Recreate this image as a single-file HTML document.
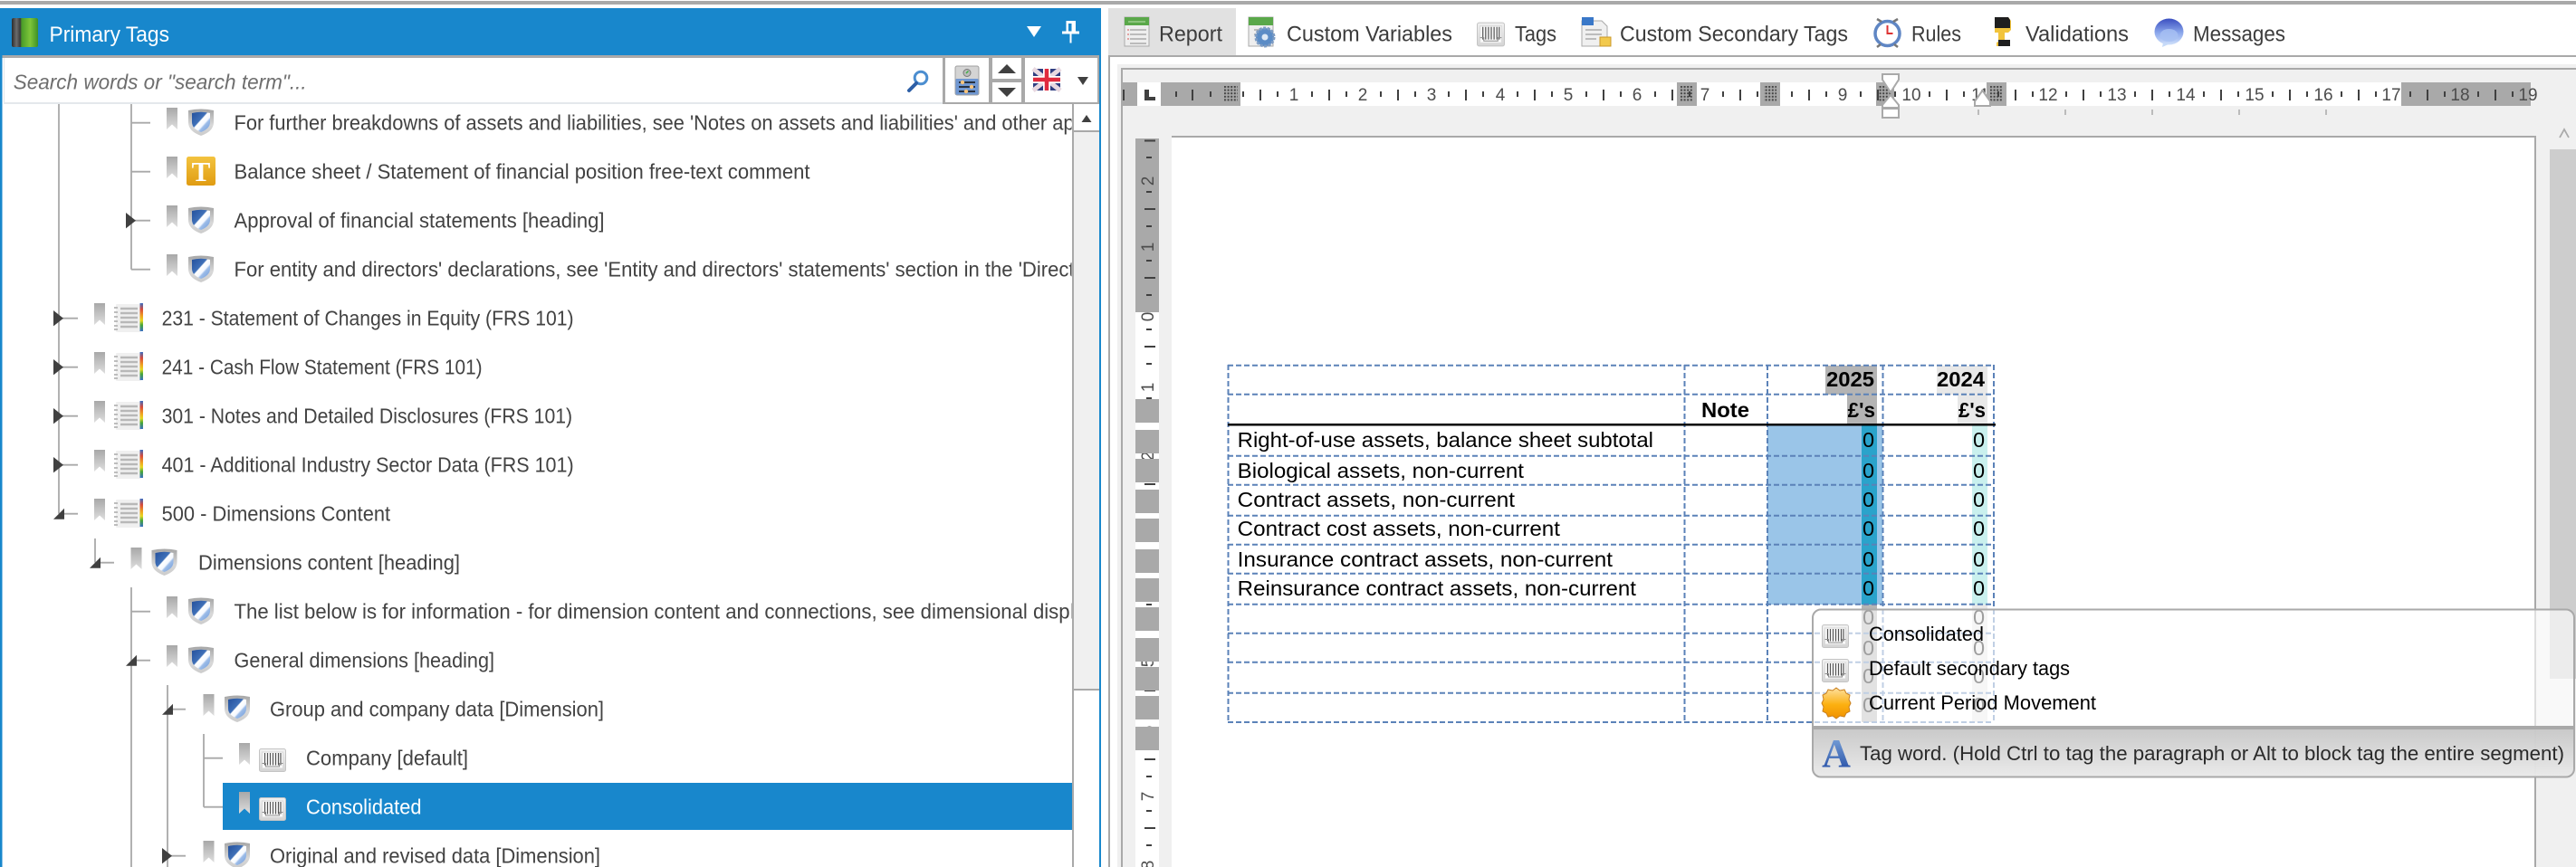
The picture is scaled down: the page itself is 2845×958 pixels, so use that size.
<!DOCTYPE html>
<html lang="en">
<head>
<meta charset="utf-8">
<title>Primary Tags</title>
<style>
html,body{margin:0;padding:0;background:#fff;width:2845px;height:958px;overflow:hidden}
svg{display:block}
text{font-family:"Liberation Sans",sans-serif}
.t{font-size:23px;fill:#424242}
.h{font-size:24px;fill:#3c3c3c}
.d{font-size:23.5px;fill:#000}
.b{font-size:23.5px;fill:#000;font-weight:bold}
.r{font-size:19px;fill:#4c4c4c;text-anchor:middle}
.tip{font-size:22.5px;fill:#000}
</style>
</head>
<body>
<svg xmlns="http://www.w3.org/2000/svg" width="2845" height="958" viewBox="0 0 2845 958">
<defs>
<linearGradient id="gBm" x1="0" y1="0" x2="0" y2="1"><stop offset="0" stop-color="#a8a8a8"/><stop offset="1" stop-color="#dedede"/></linearGradient>
<linearGradient id="gSil" x1="0" y1="0" x2="0" y2="1"><stop offset="0" stop-color="#a6a6a6"/><stop offset=".6" stop-color="#d8d8d8"/><stop offset="1" stop-color="#cccccc"/></linearGradient>
<linearGradient id="gSh" x1="0" y1="0" x2="1" y2="1"><stop offset="0" stop-color="#24509c"/><stop offset=".42" stop-color="#3f70b8"/><stop offset=".46" stop-color="#fff"/><stop offset=".62" stop-color="#f4f8ff"/><stop offset=".68" stop-color="#9cbce8"/><stop offset="1" stop-color="#6f9ad8"/></linearGradient>
<linearGradient id="gT" x1="0" y1="0" x2="0" y2="1"><stop offset="0" stop-color="#f3c33f"/><stop offset="1" stop-color="#e09c12"/></linearGradient>
<linearGradient id="gRain" x1="0" y1="0" x2="0" y2="1"><stop offset="0" stop-color="#3a6fc4"/><stop offset=".22" stop-color="#d94b3a"/><stop offset=".45" stop-color="#f0a020"/><stop offset=".62" stop-color="#e8d820"/><stop offset=".78" stop-color="#48a838"/><stop offset="1" stop-color="#3a6fc4"/></linearGradient>
<linearGradient id="gBar" x1="0" y1="0" x2="0" y2="1"><stop offset="0" stop-color="#f2f2f2"/><stop offset="1" stop-color="#d4d4d4"/></linearGradient>
<linearGradient id="gBook" x1="0" y1="0" x2="1" y2="0"><stop offset="0" stop-color="#2c2c2c"/><stop offset=".18" stop-color="#6c6c6c"/><stop offset=".32" stop-color="#3a3a3a"/><stop offset=".38" stop-color="#4a9c28"/><stop offset=".7" stop-color="#7ec63a"/><stop offset="1" stop-color="#3e9026"/></linearGradient>
<linearGradient id="gTip" x1="0" y1="0" x2="0" y2="1"><stop offset="0" stop-color="#c4c4c4"/><stop offset="1" stop-color="#e8e8e8"/></linearGradient>
<linearGradient id="gSun" x1="0" y1="0" x2="0" y2="1"><stop offset="0" stop-color="#fde0a0"/><stop offset=".55" stop-color="#fcb010"/><stop offset="1" stop-color="#f09000"/></linearGradient>
<linearGradient id="gA" x1="0" y1="0" x2="0" y2="1"><stop offset="0" stop-color="#86aee0"/><stop offset="1" stop-color="#1c46a0"/></linearGradient>
<linearGradient id="gMsg" x1="0" y1="0" x2="0" y2="1"><stop offset="0" stop-color="#3a4ec0"/><stop offset=".55" stop-color="#8ca8ec"/><stop offset="1" stop-color="#cfe0fa"/></linearGradient>
<pattern id="dots" patternUnits="userSpaceOnUse" width="3.6" height="3.6" x="1352" y="95"><rect width="2" height="2" fill="#444"/></pattern>
<symbol id="bm" viewBox="0 0 12 24" width="12" height="24"><path d="M0 0H12V24L6 18.5L0 24Z" fill="url(#gBm)"/></symbol>
<symbol id="sh" viewBox="0 0 28 30" width="28" height="30"><path d="M0 2Q14 -1 28 2V15Q28 25 14 30Q0 25 0 15Z" fill="url(#gSil)"/><path d="M4 5Q14 2.5 24 5V15Q24 22 14 26Q4 22 4 15Z" fill="url(#gSh)"/></symbol>
<symbol id="ls" viewBox="0 0 32 32" width="32" height="32"><rect x="2" y="1" width="28" height="31" rx="1" fill="#f0f0f0"/><rect x="28.500" y="0" width="3.500" height="31" fill="url(#gRain)"/><path d="M0 5h4M0 10h4M0 15h4M0 20h4M0 25h4M0 29h4" stroke="#bdbdbd" stroke-width="2"/><path d="M7 6h19M7 11h19M7 16h19M7 21h19M7 26h19" stroke="#b8b8b8" stroke-width="2.6"/></symbol>
<symbol id="bc" viewBox="0 0 30 26" width="30" height="26"><rect x=".5" y=".5" width="29" height="25" rx="2" fill="url(#gBar)" stroke="#c4c4c4"/><path d="M3.500 4h23v18h-23z" fill="#fbfbfb" stroke="#dadada"/><path d="M6.500 5v13.500M9.500 5v13.500M12.500 5v13.500M15.500 5v13.500M18.500 5v13.500M21.500 5v13.500M24 5v13.500" stroke="#555" stroke-width="1.200"/><path d="M3.500 16.500h4v3.500h15v-3.500h4" fill="none" stroke="#8c8c8c" stroke-width="1"/></symbol>
<symbol id="tk" viewBox="0 0 76 14" width="76" height="14"><path d="M19 2v6M57 2v6M38 0v12" stroke="#404040" stroke-width="2"/></symbol>
<symbol id="vk" viewBox="0 0 14 76" width="14" height="76"><path d="M4 19h6M4 57h6M2 38h12" stroke="#404040" stroke-width="2"/></symbol>
<clipPath id="cTree"><rect x="0" y="115" width="1183.5" height="843"/></clipPath>
</defs>

<!-- top strip -->
<rect x="0" y="1" width="2845" height="4" fill="#a9a9a9"/>

<!-- left panel -->
<rect x="0" y="9" width="1216" height="52" fill="#1887cc"/>
<rect x="0" y="9" width="2.5" height="949" fill="#1887cc"/>
<rect x="1214" y="9" width="2" height="949" fill="#1887cc"/>
<rect x="2.5" y="61" width="1211.5" height="3" fill="#a9a9a9"/>
<rect x="13" y="20" width="29" height="32" rx="2" fill="url(#gBook)"/>
<text x="54.5" y="46" font-size="24.5" fill="#fff" textLength="132.5" lengthAdjust="spacingAndGlyphs">Primary Tags</text>
<path d="M1134 29h16l-8 12z" fill="#fff"/>
<path d="M1177.500 23h10.500v11.500h4v3h-8.500v10h-2v-10h-8.500v-3h4.500zM1180 26v8.500h3.500v-8.500z" fill="#fff" fill-rule="evenodd"/>

<!-- search row -->
<rect x="4" y="64" width="1037" height="49" fill="#fff"/>
<rect x="4" y="64" width="1" height="49" fill="#e2e6ea"/>
<rect x="4" y="113" width="1037" height="2" fill="#e4e8ec"/>
<text x="14.7" y="98.5" font-size="23" font-style="italic" fill="#6e6e6e" textLength="324" lengthAdjust="spacingAndGlyphs">Search words or "search term"...</text>
<circle cx="1017" cy="86" r="6.8" fill="none" stroke="#4c8ed0" stroke-width="3"/>
<path d="M1012 92L1004 100" stroke="#2d5fa6" stroke-width="4" stroke-linecap="round"/>
<path d="M1041 64h3v49h-3zM1092 64h4v49h-4zM1128 64h4v49h-4zM1212 64h2v49h-2zM1096 87h32v4h-32zM1041 113h173v2h-173z" fill="#a9a9a9"/>
<rect x="1055" y="73" width="26" height="32" rx="2" fill="#d4d4d4" stroke="#a0a0a0"/>
<rect x="1055.5" y="87" width="25" height="17.5" rx="1" fill="#6f97d2"/>
<circle cx="1068" cy="80.5" r="4" fill="#bbb" stroke="#777"/><path d="M1067 81l2.5 -2.5" stroke="#3cb043" stroke-width="1.5"/>
<path d="M1059 91h18M1059 96h18M1059 101h18" stroke="#111" stroke-width="1.5"/>
<circle cx="1063" cy="91" r="2.2" fill="#f6c27a"/><circle cx="1073" cy="96" r="2.2" fill="#f6c27a"/><circle cx="1067" cy="101" r="2.2" fill="#f6c27a"/>
<path d="M1102 81l10 -10l10 10z" fill="#404040"/>
<path d="M1102 97h20l-10 10z" fill="#404040"/>
<rect x="1141" y="76" width="30" height="24" rx="2" fill="#2f3d80"/>
<path d="M1141 76l30 24M1171 76l-30 24" stroke="#e8d8e0" stroke-width="5"/>
<path d="M1156 76v24M1141 88h30" stroke="#fff" stroke-width="8"/>
<path d="M1156 76v24M1141 88h30" stroke="#e02a3e" stroke-width="4.5"/>
<path d="M1190 85h12l-6 9z" fill="#404040"/>

<!-- left scrollbar -->
<rect x="1184" y="115" width="30" height="843" fill="#f0f0f0"/>
<rect x="1184" y="115" width="30" height="30" fill="#fff"/>
<rect x="1184" y="115" width="2" height="843" fill="#a9a9a9"/>
<rect x="1184" y="144" width="30" height="2" fill="#a9a9a9"/>
<path d="M1194.5 135l5.5 -8l5.5 8z" fill="#404040"/>
<rect x="1186" y="762" width="28" height="196" fill="#fff"/>
<rect x="1186" y="761" width="28" height="2" fill="#a9a9a9"/>

<!-- selected row -->
<rect x="246" y="865" width="938" height="52" fill="#1887cc"/>

<!-- tree lines -->
<path d="M65 115V567.7M105 595V621.7M145 115V297.7M145 649V958M185 757V958M225 811V891.7M145 135.7h21M145 189.7h21M145 243.7h21M145 297.7h21M65 351.7h21M65 405.7h21M65 459.7h21M65 513.7h21M65 567.7h21M105 621.7h21M145 675.7h21M145 729.7h21M185 783.7h20M225 837.7h21M225 891.7h21M185 945.7h20" fill="none" stroke="#a9a9a9" stroke-width="1.8"/>

<!-- tree arrows -->
<path d="M139 235l11 8.7l-11 8.7zM59 343l11 8.7l-11 8.7zM59 397l11 8.7l-11 8.7zM59 451l11 8.7l-11 8.7zM59 505l11 8.7l-11 8.7zM179 937l11 8.7l-11 8.7z" fill="#404040"/>
<path d="M59 573.7h12v-12zM99 627.7h12v-12zM139 735.7h12v-12zM179 789.7h12v-12z" fill="#404040"/>

<!-- tree icons -->
<use href="#bm" x="184" y="119"/><use href="#sh" x="208" y="120"/>
<use href="#bm" x="184" y="173"/><rect x="206" y="173" width="32" height="32" rx="2.5" fill="url(#gT)"/>
<text x="222" y="200" text-anchor="middle" font-size="31" fill="#fff" style="font-family:'Liberation Serif',serif" font-weight="bold">T</text>
<use href="#bm" x="184" y="227"/><use href="#sh" x="208" y="228"/>
<use href="#bm" x="184" y="281"/><use href="#sh" x="208" y="282"/>
<use href="#bm" x="104" y="335"/><use href="#ls" x="126" y="335"/>
<use href="#bm" x="104" y="389"/><use href="#ls" x="126" y="389"/>
<use href="#bm" x="104" y="443"/><use href="#ls" x="126" y="443"/>
<use href="#bm" x="104" y="497"/><use href="#ls" x="126" y="497"/>
<use href="#bm" x="104" y="551"/><use href="#ls" x="126" y="551"/>
<use href="#bm" x="144.500" y="605"/><use href="#sh" x="167.500" y="606"/>
<use href="#bm" x="184" y="659"/><use href="#sh" x="208" y="660"/>
<use href="#bm" x="184" y="713"/><use href="#sh" x="208" y="714"/>
<use href="#bm" x="224.500" y="767"/><use href="#sh" x="248" y="768"/>
<use href="#bm" x="264" y="821"/><use href="#bc" x="286" y="827"/>
<use href="#bm" x="264" y="875"/><use href="#bc" x="286" y="881"/>
<use href="#bm" x="224.500" y="929"/><use href="#sh" x="248" y="930"/>

<!-- tree text -->
<g clip-path="url(#cTree)">
<text class="t" x="258.5" y="143.5" textLength="928" lengthAdjust="spacingAndGlyphs">For further breakdowns of assets and liabilities, see 'Notes on assets and liabilities' and other ap</text>
<text class="t" x="258.5" y="197.5" textLength="636" lengthAdjust="spacingAndGlyphs">Balance sheet / Statement of financial position free-text comment</text>
<text class="t" x="258.5" y="251.5" textLength="409" lengthAdjust="spacingAndGlyphs">Approval of financial statements [heading]</text>
<text class="t" x="258.5" y="305.5" textLength="928" lengthAdjust="spacingAndGlyphs">For entity and directors' declarations, see 'Entity and directors' statements' section in the 'Direct</text>
<text class="t" x="178.6" y="359.5" textLength="455" lengthAdjust="spacingAndGlyphs">231 - Statement of Changes in Equity (FRS 101)</text>
<text class="t" x="178.6" y="413.5" textLength="354" lengthAdjust="spacingAndGlyphs">241 - Cash Flow Statement (FRS 101)</text>
<text class="t" x="178.6" y="467.5" textLength="453.500" lengthAdjust="spacingAndGlyphs">301 - Notes and Detailed Disclosures (FRS 101)</text>
<text class="t" x="178.6" y="521.5" textLength="455" lengthAdjust="spacingAndGlyphs">401 - Additional Industry Sector Data (FRS 101)</text>
<text class="t" x="178.6" y="575.5" textLength="252.5" lengthAdjust="spacingAndGlyphs">500 - Dimensions Content</text>
<text class="t" x="219" y="629.5" textLength="289" lengthAdjust="spacingAndGlyphs">Dimensions content [heading]</text>
<text class="t" x="258.5" y="683.5" textLength="928" lengthAdjust="spacingAndGlyphs">The list below is for information - for dimension content and connections, see dimensional displ</text>
<text class="t" x="258.5" y="737.5" textLength="287.5" lengthAdjust="spacingAndGlyphs">General dimensions [heading]</text>
<text class="t" x="298" y="791.5" textLength="369" lengthAdjust="spacingAndGlyphs">Group and company data [Dimension]</text>
<text class="t" x="338" y="845.5" textLength="179" lengthAdjust="spacingAndGlyphs">Company [default]</text>
<text class="t" x="338" y="899.5" textLength="127.5" lengthAdjust="spacingAndGlyphs" style="fill:#fff">Consolidated</text>
<text class="t" x="298" y="953.5" textLength="365" lengthAdjust="spacingAndGlyphs">Original and revised data [Dimension]</text>
</g>

<!-- tabs -->
<rect x="1224" y="9" width="141" height="52" fill="#e1e1e1"/>
<rect x="1224" y="61" width="1621" height="2" fill="#a9a9a9"/>
<rect x="1224" y="61" width="2" height="897" fill="#a9a9a9"/>

<g>
<rect x="1242" y="19" width="27" height="32" fill="#eee" stroke="#aaa"/><rect x="1242" y="19" width="27" height="9" fill="#5aa84a"/><path d="M1246 24h19" stroke="#bfe0b0" stroke-width="1"/><path d="M1248 33h18M1248 38h18M1248 43h18M1248 48h18" stroke="#aaa" stroke-width="1.5"/><path d="M1245 33h2M1245 38h2M1245 43h2" stroke="#d88" stroke-width="1.5"/>
<rect x="1379" y="19" width="27" height="32" fill="#eee" stroke="#aaa"/><rect x="1379" y="19" width="27" height="9" fill="#5aa84a"/><path d="M1385 33h18M1385 38h18" stroke="#aaa" stroke-width="1.5"/><circle cx="1397" cy="41" r="10" fill="#5b8cc6" stroke="#7d9cc4" stroke-dasharray="3 1.5" stroke-width="3"/><circle cx="1397" cy="41" r="3.5" fill="#dce8f5"/>
<use href="#bc" x="1631" y="24" width="31" height="28"/>
<path d="M1747 23h22l6 6v22h-28z" fill="#f0f0f0" stroke="#aaa"/><rect x="1747" y="19" width="13" height="9" fill="#3a78c8"/><path d="M1751 33h18M1751 38h18M1751 43h12" stroke="#aaa" stroke-width="1.6"/><rect x="1767" y="41" width="12" height="10" fill="#f2c94c" stroke="#c9982a"/>
<circle cx="2084.5" cy="37" r="13.5" fill="#fff" stroke="#5f86c4" stroke-width="3.5"/><path d="M2084.500 28v9h6" fill="none" stroke="#d33" stroke-width="2"/><path d="M2073 21l5 3M2096 21l-5 3M2073 52l4 -3M2096 52l-4 -3" stroke="#777" stroke-width="2.500"/>
<path d="M2203 19h15l3 4v10l-3 3h-4v9l4 1v5h-13v-4l2 -1V36h-4z" fill="#f2c43c"/><path d="M2203 19h15l2 3v9h-17zM2207 44h13v7h-13z" fill="#1f1f1f"/>
<ellipse cx="2395.5" cy="35" rx="16" ry="14.5" fill="url(#gMsg)"/><ellipse cx="2395.5" cy="39" rx="10" ry="7" fill="#a8c0f2" opacity=".8"/><path d="M2389 47l-1 5l7 -3z" fill="#c6daf8"/>
</g>
<text class="h" x="1280" y="45.5" textLength="70" lengthAdjust="spacingAndGlyphs">Report</text>
<text class="h" x="1421" y="45.5" textLength="183" lengthAdjust="spacingAndGlyphs">Custom Variables</text>
<text class="h" x="1673" y="45.5" textLength="46" lengthAdjust="spacingAndGlyphs">Tags</text>
<text class="h" x="1789" y="45.5" textLength="252" lengthAdjust="spacingAndGlyphs">Custom Secondary Tags</text>
<text class="h" x="2111" y="45.5" textLength="55" lengthAdjust="spacingAndGlyphs">Rules</text>
<text class="h" x="2237" y="45.5" textLength="114" lengthAdjust="spacingAndGlyphs">Validations</text>
<text class="h" x="2422" y="45.5" textLength="102" lengthAdjust="spacingAndGlyphs">Messages</text>

<!-- document area -->
<rect x="1234" y="71" width="1611" height="887" fill="#f0f0f0"/>
<rect x="1238" y="75" width="2" height="883" fill="#a9a9a9"/>
<rect x="1238" y="75" width="1607" height="2" fill="#a9a9a9"/>

<!-- page -->
<rect x="1294" y="150" width="1505" height="808" fill="#fff"/>
<rect x="1294" y="150" width="1505" height="2" fill="#a9a9a9"/>
<rect x="2799" y="150" width="2" height="808" fill="#a9a9a9"/>

<!-- right scrollbar -->
<rect x="2816" y="165" width="29" height="585" fill="#cdcdcd"/>
<path d="M2827 152l5 -9l5 9" fill="none" stroke="#aaa" stroke-width="1.800"/>

<!-- horizontal ruler -->
<rect x="1240" y="91" width="1555" height="26" fill="#fff"/>
<rect x="1240" y="91" width="16" height="26" fill="#a9a9a9"/>
<rect x="1282" y="91" width="88" height="26" fill="#a9a9a9"/>
<rect x="1852" y="91" width="22" height="26" fill="#a9a9a9"/>
<rect x="1944" y="91" width="22" height="26" fill="#a9a9a9"/>
<rect x="2072" y="91" width="20" height="26" fill="#a9a9a9"/>
<rect x="2194" y="91" width="22" height="26" fill="#a9a9a9"/>
<rect x="2652" y="91" width="143" height="26" fill="#a9a9a9"/>
<path d="M1264 99h5v8h7v4h-12z" fill="#404040"/>
<path d="M1241 99v12M1299 101v6M1317 99v12M1337 101v6" stroke="#404040" stroke-width="2"/>
<use href="#tk" x="1354" y="99"/><use href="#tk" x="1430" y="99"/><use href="#tk" x="1506" y="99"/><use href="#tk" x="1581" y="99"/><use href="#tk" x="1657" y="99"/><use href="#tk" x="1733" y="99"/><use href="#tk" x="1809" y="99"/><use href="#tk" x="1884" y="99"/><use href="#tk" x="1960" y="99"/><use href="#tk" x="2036" y="99"/><use href="#tk" x="2112" y="99"/><use href="#tk" x="2188" y="99"/><use href="#tk" x="2263" y="99"/><use href="#tk" x="2339" y="99"/><use href="#tk" x="2415" y="99"/><use href="#tk" x="2491" y="99"/><use href="#tk" x="2567" y="99"/><use href="#tk" x="2643" y="99"/><use href="#tk" x="2718" y="99"/>
<rect x="1352" y="95" width="15" height="18" fill="url(#dots)"/>
<rect x="1856" y="95" width="14" height="18" fill="url(#dots)"/>
<rect x="1948" y="95" width="14" height="18" fill="url(#dots)"/>
<rect x="2075" y="95" width="14" height="18" fill="url(#dots)"/>
<rect x="2198" y="95" width="14" height="18" fill="url(#dots)"/>
<g class="rn">
<text class="r" x="1429" y="111">1</text><text class="r" x="1505" y="111">2</text><text class="r" x="1581" y="111">3</text><text class="r" x="1657" y="111">4</text><text class="r" x="1732" y="111">5</text><text class="r" x="1808" y="111">6</text><text class="r" x="1883" y="111">7</text><text class="r" x="2035" y="111">9</text><text class="r" x="2111" y="111">10</text><text class="r" x="2187" y="111">11</text><text class="r" x="2262" y="111">12</text><text class="r" x="2338" y="111">13</text><text class="r" x="2414" y="111">14</text><text class="r" x="2490" y="111">15</text><text class="r" x="2566" y="111">16</text><text class="r" x="2641" y="111">17</text><text class="r" x="2717" y="111">18</text><text class="r" x="2792" y="111">19</text>
</g>
<path d="M2079 82h18v6l-9 14l-9 -14z" fill="#fff" stroke="#a9a9a9" stroke-width="2"/>
<path d="M2088 105l9 11v3h-18v-3z" fill="#fff" stroke="#a9a9a9" stroke-width="2"/>
<rect x="2079" y="120" width="18" height="10" fill="#fff" stroke="#a9a9a9" stroke-width="2"/>
<path d="M2189.500 100l8.500 12v5h-17v-5z" fill="#fff" stroke="#a9a9a9" stroke-width="2"/>
<path d="M2185 121v6M2281 121v6M2377 121v6M2473 121v6M2569 121v6" stroke="#a9a9a9" stroke-width="1.500"/>

<!-- vertical ruler -->
<rect x="1254" y="153" width="26" height="805" fill="#fff"/>
<rect x="1254" y="153" width="26" height="192" fill="#a9a9a9"/>
<path d="M1264 155.500h12M1266 174h6" stroke="#404040" stroke-width="2"/>
<use href="#vk" x="1262" y="193"/><use href="#vk" x="1262" y="269"/><use href="#vk" x="1262" y="345"/><use href="#vk" x="1262" y="421"/><use href="#vk" x="1262" y="497"/><use href="#vk" x="1262" y="573"/><use href="#vk" x="1262" y="649"/><use href="#vk" x="1262" y="725"/><use href="#vk" x="1262" y="801"/><use href="#vk" x="1262" y="877"/>
<text class="r" transform="translate(1274 200) rotate(-90)">2</text>
<text class="r" transform="translate(1274 273) rotate(-90)">1</text>
<text class="r" transform="translate(1274 350) rotate(-90)">0</text>
<text class="r" transform="translate(1274 428) rotate(-90)">1</text>
<text class="r" transform="translate(1274 504) rotate(-90)">2</text>
<text class="r" transform="translate(1274 580) rotate(-90)">3</text>
<text class="r" transform="translate(1274 656) rotate(-90)">4</text>
<text class="r" transform="translate(1274 732) rotate(-90)">5</text>
<text class="r" transform="translate(1274 807) rotate(-90)">6</text>
<text class="r" transform="translate(1274 880) rotate(-90)">7</text>
<text class="r" transform="translate(1274 956) rotate(-90)">8</text>
<path d="M1254 441h26v26h-26zM1254 475h26v26h-26zM1254 507h26v26h-26zM1254 541h26v26h-26zM1254 573h26v26h-26zM1254 607h26v26h-26zM1254 639h26v26h-26zM1254 671h26v26h-26zM1254 705h26v26h-26zM1254 737h26v26h-26zM1254 769h26v26h-26zM1254 803h26v26h-26z" fill="#a9a9a9"/>

<!-- table fills -->
<rect x="1952" y="470" width="127" height="198" fill="#9ac5e8"/>
<rect x="2016" y="404" width="57" height="32" fill="#b4b4b4"/>
<rect x="2040" y="436" width="33" height="33" fill="#b4b4b4"/>
<rect x="2139" y="404" width="56" height="32" fill="#e8e8e8"/>
<rect x="2162" y="436" width="33" height="33" fill="#e8e8e8"/>
<rect x="2056" y="470" width="17" height="198" fill="#2aa3cb"/>
<rect x="2178" y="470" width="17" height="198" fill="#c9f0ee"/>
<rect x="2056" y="668" width="17" height="130" fill="#b4b4b4"/>
<rect x="2178" y="668" width="17" height="130" fill="#e8e8e8"/>

<!-- table grid -->
<path d="M1356 403.700H2202M1356 435.700H2202M1356 503.700H2202M1356 535.700H2202M1356 569.700H2202M1356 601.700H2202M1356 633.700H2202M1356 667.700H2202M1356 699.700H2202M1356 731.700H2202M1356 765.700H2202M1356 798H2202M1356.500 403V799M1860.500 403V799M1952 403V799M2079.500 403V799M2202 403V799" fill="none" stroke="#5b82b8" stroke-width="2" stroke-dasharray="6 3"/>
<rect x="1356" y="468" width="848" height="2.500" fill="#000"/>

<!-- table text -->
<text class="b" x="2017" y="427" textLength="53" lengthAdjust="spacingAndGlyphs">2025</text>
<text class="b" x="2139" y="427" textLength="53" lengthAdjust="spacingAndGlyphs">2024</text>
<text class="b" x="1879" y="461" textLength="53" lengthAdjust="spacingAndGlyphs">Note</text>
<text class="b" x="2040.600" y="461" textLength="30.400" lengthAdjust="spacingAndGlyphs">£'s</text>
<text class="b" x="2163" y="461" textLength="30" lengthAdjust="spacingAndGlyphs">£'s</text>
<text class="d" x="1366.700" y="494" textLength="459.300" lengthAdjust="spacingAndGlyphs">Right-of-use assets, balance sheet subtotal</text>
<text class="d" x="1366.700" y="528" textLength="316.300" lengthAdjust="spacingAndGlyphs">Biological assets, non-current</text>
<text class="d" x="1366.700" y="560" textLength="306.300" lengthAdjust="spacingAndGlyphs">Contract assets, non-current</text>
<text class="d" x="1366.700" y="592" textLength="356.300" lengthAdjust="spacingAndGlyphs">Contract cost assets, non-current</text>
<text class="d" x="1366.700" y="626" textLength="414.300" lengthAdjust="spacingAndGlyphs">Insurance contract assets, non-current</text>
<text class="d" x="1366.700" y="658" textLength="440.300" lengthAdjust="spacingAndGlyphs">Reinsurance contract assets, non-current</text>
<g>
<text class="d" x="2057" y="494">0</text><text class="d" x="2057" y="528">0</text><text class="d" x="2057" y="560">0</text><text class="d" x="2057" y="592">0</text><text class="d" x="2057" y="626">0</text><text class="d" x="2057" y="658">0</text><text class="d" x="2057" y="690">0</text><text class="d" x="2057" y="724">0</text><text class="d" x="2057" y="755">0</text><text class="d" x="2057" y="787">0</text>
<text class="d" x="2179" y="494">0</text><text class="d" x="2179" y="528">0</text><text class="d" x="2179" y="560">0</text><text class="d" x="2179" y="592">0</text><text class="d" x="2179" y="626">0</text><text class="d" x="2179" y="658">0</text><text class="d" x="2179" y="690">0</text><text class="d" x="2179" y="724">0</text><text class="d" x="2179" y="755">0</text><text class="d" x="2179" y="787">0</text>
</g>

<!-- tooltip -->
<rect x="2002" y="673.5" width="841" height="185" rx="9" fill="#fff" fill-opacity=".62"/>
<path d="M2003 804V850a8 8 0 0 0 8 8H2834a8 8 0 0 0 8 -8V804z" fill="url(#gTip)" fill-opacity=".92"/>
<rect x="2002" y="673.5" width="841" height="185" rx="9" fill="none" stroke="#a9a9a9" stroke-width="2"/>
<rect x="2002" y="802" width="841" height="4" fill="#a9a9a9"/>
<use href="#bc" x="2012" y="690"/>
<use href="#bc" x="2012" y="728"/>
<path d="M2028 760l4 3l5 -1l2 4l4 2l-1 5l2 4l-2 4l1 5l-4 2l-2 4l-5 -1l-4 3l-4 -3l-5 1l-2 -4l-4 -2l1 -5l-2 -4l2 -4l-1 -5l4 -2l2 -4l5 1z" fill="url(#gSun)" stroke="#c9801e" stroke-width="1"/>
<text class="tip" x="2064" y="708" textLength="127" lengthAdjust="spacingAndGlyphs">Consolidated</text>
<text class="tip" x="2064" y="746" textLength="222" lengthAdjust="spacingAndGlyphs">Default secondary tags</text>
<text class="tip" x="2064" y="784" textLength="251" lengthAdjust="spacingAndGlyphs">Current Period Movement</text>
<text x="2028" y="847" text-anchor="middle" font-size="44" font-weight="bold" fill="url(#gA)" style="font-family:'Liberation Serif',serif">A</text>
<text class="tip" x="2054" y="840" textLength="778" lengthAdjust="spacingAndGlyphs" style="fill:#2a2a2a">Tag word. (Hold Ctrl to tag the paragraph or Alt to block tag the entire segment)</text>
</svg>
</body>
</html>
